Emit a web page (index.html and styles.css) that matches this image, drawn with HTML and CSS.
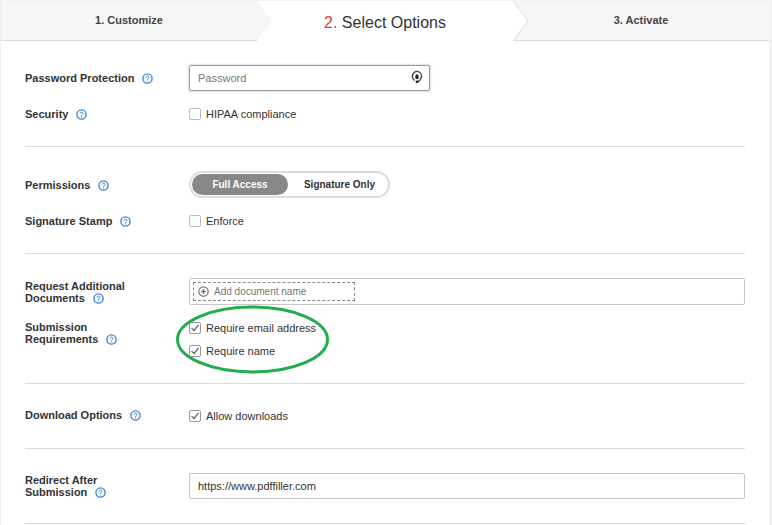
FILE: index.html
```
<!DOCTYPE html>
<html lang="en">
<head>
<meta charset="utf-8">
<title>Select Options</title>
<meta name="viewport" content="width=device-width, initial-scale=1">
<link rel="stylesheet" href="styles.css">
</head>
<body>
<svg class="sprite" aria-hidden="true">
  <symbol id="help" viewBox="0 0 11 11">
    <circle cx="5.5" cy="5.5" r="4.6" fill="none" stroke="currentColor" stroke-width="1.4"/>
    <path d="M4 4.6C4 2.6 7.1 2.7 7 4.5C6.9 5.5 5.5 5.3 5.5 6.7M5.5 7.4V8.4" fill="none" stroke="currentColor" stroke-width="1"/>
  </symbol>
</svg>
<main class="panel">
  <nav class="steps" aria-label="Steps">
    <a class="step" href="#customize">1. Customize</a>
    <a class="step current" href="#options" aria-current="step">
      <svg class="chevron start" viewBox="0 0 16 40" aria-hidden="true"><path class="shade" d="M0 0L15 20L0 40Z"/></svg>
      <span><span class="number">2.</span> Select Options</span>
      <svg class="chevron end" viewBox="0 0 16 40" aria-hidden="true"><path class="light" d="M0 0L15 20L0 40Z"/><path class="edge" d="M0 0L15 20L0 40"/></svg>
    </a>
    <a class="step" href="#activate">3. Activate</a>
  </nav>
  <form class="options">
    <section class="group">
      <div class="row">
        <div class="name"><label for="password">Password Protection</label><button class="help" type="button" aria-label="Help"><svg><use href="#help"/></svg></button></div>
        <div class="password">
          <input class="text" id="password" type="password" placeholder="Password">
          <svg class="key" viewBox="0 0 12 14" aria-hidden="true"><path d="M3.600 10.500A4.500 4.900 0 1 1 10 8.500Q9 10.800 6.500 12" fill="none" stroke="#444" stroke-width="1.400"/><circle cx="6" cy="5.800" r="1.500" fill="#222"/><path d="M4.500 6H7.500V9H4.500Z" fill="#222"/><circle cx="6" cy="11.800" r="1.400" fill="#222"/></svg>
        </div>
      </div>
      <div class="row">
        <div class="name"><span>Security</span><button class="help" type="button" aria-label="Help"><svg><use href="#help"/></svg></button></div>
        <label class="check"><input type="checkbox">HIPAA compliance</label>
      </div>
    </section>
    <section class="group">
      <div class="row">
        <div class="name"><span>Permissions</span><button class="help" type="button" aria-label="Help"><svg><use href="#help"/></svg></button></div>
        <div class="toggle">
          <button type="button" aria-pressed="true">Full Access</button>
          <button type="button" aria-pressed="false">Signature Only</button>
        </div>
      </div>
      <div class="row">
        <div class="name"><span>Signature Stamp</span><button class="help" type="button" aria-label="Help"><svg><use href="#help"/></svg></button></div>
        <label class="check"><input type="checkbox">Enforce</label>
      </div>
    </section>
    <section class="group">
      <div class="row">
        <div class="name"><span>Request Additional<br>Documents</span><button class="help" type="button" aria-label="Help"><svg><use href="#help"/></svg></button></div>
        <div class="documents">
          <button class="add" type="button"><svg viewBox="0 0 11 11" aria-hidden="true"><circle cx="5.500" cy="5.500" r="4.700" fill="none" stroke="#777" stroke-width="1.200"/><path d="M3 5.500H8M5.500 3V8" stroke="#777" stroke-width="1.400"/></svg>Add document name</button>
        </div>
      </div>
      <div class="row top">
        <div class="name"><span>Submission<br>Requirements</span><button class="help" type="button" aria-label="Help"><svg><use href="#help"/></svg></button></div>
        <div class="checks">
          <label class="check"><input type="checkbox" checked>Require email address</label>
          <label class="check"><input type="checkbox" checked>Require name</label>
          <svg class="ring" viewBox="0 0 154 69" aria-hidden="true"><ellipse cx="77.500" cy="34.500" rx="75" ry="32.500" fill="none" stroke="#22ac4b" stroke-width="3"/></svg>
        </div>
      </div>
    </section>
    <section class="group">
      <div class="row top">
        <div class="name"><span>Download Options</span><button class="help" type="button" aria-label="Help"><svg><use href="#help"/></svg></button></div>
        <label class="check"><input type="checkbox" checked>Allow downloads</label>
      </div>
    </section>
    <section class="group">
      <div class="row">
        <div class="name"><label for="redirect">Redirect After<br>Submission</label><button class="help" type="button" aria-label="Help"><svg><use href="#help"/></svg></button></div>
        <input class="text" id="redirect" type="text" value="https://www.pdffiller.com">
      </div>
    </section>
  </form>
</main>
</body>
</html>
```
FILE: styles.css
```
* { box-sizing: border-box; }
body {
  margin: 0;
  padding: 1px 3px 0 1px;
  background: #f1f1f1;
  color: #333;
  font: 11px/16px "Liberation Sans", Arial, sans-serif;
}
button, input { font: inherit; color: inherit; margin: 0; }
button { cursor: pointer; }
.sprite { display: none; }
.panel { min-height: calc(100vh - 1px); background: #fff; }

.steps { display: grid; grid-template-columns: repeat(3, 1fr); }
.step {
  height: 40px;
  display: flex;
  align-items: center;
  justify-content: center;
  position: relative;
  padding-bottom: 2px;
  background: #f6f6f6;
  border-bottom: 1px solid #dcdcdc;
  color: #444;
  font-weight: bold;
  text-decoration: none;
}
.current {
  z-index: 1;
  background: #fff;
  border-color: #fff;
  color: #333;
  font-size: 16px;
  font-weight: normal;
  padding: 4px 0 0;
}
.number { color: #e03c3c; }
.chevron { position: absolute; top: 0; width: 16px; height: 40px; }
.start { left: 0; }
.end { left: 100%; }
.shade { fill: #f6f6f6; }
.light { fill: #fff; }
.edge { fill: none; stroke: #dcdcdc; }

.options { padding: 0 24px; }
.group {
  display: flex;
  flex-direction: column;
  gap: 15px;
  padding: 24px 0;
  border-bottom: 1px solid #dcdcdc;
}
.row { display: grid; grid-template-columns: 164px 1fr; align-items: center; }
.top { align-items: start; }
.top .name { padding-top: 1px; }
.name { font-weight: bold; line-height: 12px; white-space: nowrap; }
.help {
  width: 11px;
  height: 11px;
  margin-left: 8px;
  padding: 0;
  border: 0;
  background: none;
  color: #3b86e0;
  vertical-align: -2px;
  line-height: 0;
}
.help svg { width: 11px; height: 11px; }

.text {
  width: 100%;
  height: 26px;
  padding: 0 8px;
  border: 1px solid #c8c8c8;
  border-radius: 2px;
  background: #fff;
}
.text::placeholder { color: #777; opacity: 1; }
.password { position: relative; width: 241px; }
.password .text { border-color: #999; box-shadow: 0 0 3px #bbb; padding-right: 24px; }
.key { position: absolute; right: 7px; top: 5px; width: 12px; height: 14px; }

.check { display: flex; align-items: center; gap: 5px; height: 16px; }
.check input {
  appearance: none;
  width: 12px;
  height: 12px;
  border: 1px solid #bbb;
  border-radius: 2px;
  background: #fff;
}
.check input:checked {
  border-color: #999;
  background: url("data:image/svg+xml,%3Csvg xmlns='http://www.w3.org/2000/svg' viewBox='0 0 10 10'%3E%3Cpath d='M1.500 5L4 7.500L8.500 2' fill='none' stroke='%23666' stroke-width='1.200'/%3E%3C/svg%3E") center / 10px no-repeat;
}
.checks { position: relative; display: flex; flex-direction: column; gap: 7px; }
.ring { position: absolute; left: -14px; top: -15px; width: 154px; height: 69px; pointer-events: none; }

.toggle {
  display: grid;
  grid-template-columns: 96px 1fr;
  justify-self: start;
  width: 201px;
  height: 27px;
  padding: 1px;
  border: 2px solid #dcdcdc;
  border-radius: 14px;
}
.toggle button {
  padding: 0;
  border: 0;
  border-radius: 11px;
  background: none;
  font-size: 10px;
  font-weight: bold;
}
.toggle button[aria-pressed="true"] { background: #888; color: #fff; }
.toggle button[aria-pressed="false"] { padding-left: 4px; }

.documents {
  display: flex;
  height: 27px;
  padding: 3px;
  border: 1px solid #c8c8c8;
  border-radius: 2px;
}
.add {
  display: flex;
  align-items: center;
  gap: 5px;
  width: 162px;
  padding: 0 4px;
  border: 1px dashed #888;
  background: none;
  color: #777;
  font-size: 10px;
}
.add svg { width: 11px; height: 11px; }
```
